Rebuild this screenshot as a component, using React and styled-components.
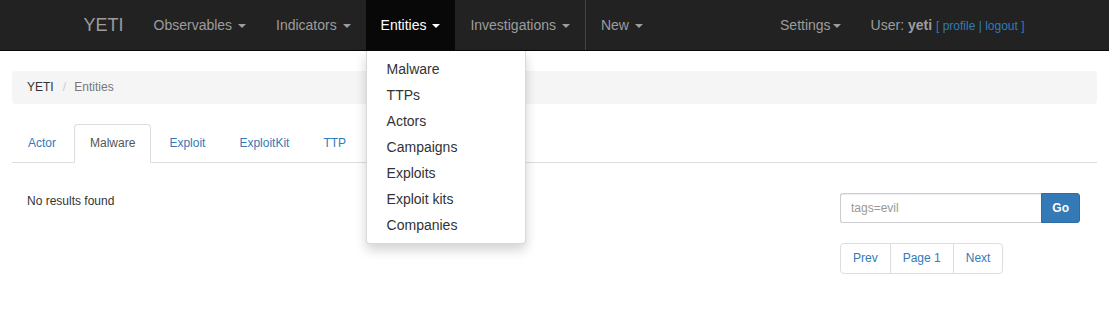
import React from 'react';
import styled, { createGlobalStyle } from 'styled-components';

const GlobalStyle = createGlobalStyle`
  * { box-sizing: border-box; }
  body {
    margin: 0;
    font-family: "Liberation Sans", Arial, Helvetica, sans-serif;
    font-size: 12px;
    line-height: 1.42857;
    color: #333;
    background: #fff;
  }
  a { text-decoration: none; }
`;

const Navbar = styled.nav`
  background: #222;
  border-bottom: 1px solid #080808;
  height: 51px;
  margin-bottom: 20px;
`;

const NavContainer = styled.div`
  width: 970px;
  margin: 0 auto;
  display: flex;
  height: 50px;
  font-size: 14px;
  line-height: 20px;
`;

const Brand = styled.a`
  padding: 15px 15px 15px 14px;
  font-size: 18px;
  line-height: 20px;
  color: #9d9d9d;
`;

const NavList = styled.ul`
  display: flex;
  list-style: none;
  margin: 0;
  padding: 0;
`;

const NavItem = styled.li`
  position: relative;
  background: ${p => (p.$active ? '#080808' : 'transparent')};
  border-right: ${p => (p.$divider ? '1px solid #444' : 'none')};
`;

const NavLink = styled.a`
  display: block;
  padding: 15px;
  color: ${p => (p.$active ? '#fff' : '#9d9d9d')};
`;

const Caret = styled.span`
  display: inline-block;
  width: 0;
  height: 0;
  margin-left: 2px;
  vertical-align: middle;
  border-top: 4px solid;
  border-right: 4px solid transparent;
  border-left: 4px solid transparent;
`;

const Spacer = styled.div`
  flex: 1;
`;

const NavText = styled.p`
  margin: 15px;
  color: #9d9d9d;
  b { color: #9d9d9d; }
`;

const SmallLink = styled.span`
  font-size: 12px;
  color: #337ab7;
  a { color: #337ab7; }
`;

const Menu = styled.ul`
  position: absolute;
  top: calc(100% + 1px);
  left: 0;
  z-index: 10;
  min-width: 160px;
  margin: 0;
  padding: 5px 0;
  list-style: none;
  background: #fff;
  border: 1px solid rgba(0, 0, 0, 0.15);
  border-top: 0;
  border-radius: 0 0 4px 4px;
  box-shadow: 0 6px 12px rgba(0, 0, 0, 0.175);
`;

const MenuLink = styled.a`
  display: block;
  padding: 3px 20px;
  line-height: 20px;
  font-size: 14px;
  color: #333;
  white-space: nowrap;
`;

const Page = styled.div`
  padding: 0 12px;
`;

const Breadcrumb = styled.ol`
  display: flex;
  list-style: none;
  margin: 0 0 20px;
  padding: 8px 15px;
  background: #f5f5f5;
  border-radius: 4px;
  line-height: 17px;
`;

const Crumb = styled.li`
  color: ${p => (p.$current ? '#777' : '#333')};
  &:not(:first-child) {
    margin-left: 4px;
  }
  &:not(:first-child)::before {
    content: "/\\00a0";
    padding: 0 5px;
    color: #ccc;
  }
`;

const Tabs = styled.ul`
  display: flex;
  list-style: none;
  margin: 0;
  padding: 0;
  border-bottom: 1px solid #ddd;
`;

const Tab = styled.li`
  margin-bottom: -1px;
  margin-right: 2px;
`;

const TabLink = styled.a`
  display: block;
  padding: 10px 15px;
  line-height: 17px;
  border: 1px solid ${p => (p.$active ? '#ddd' : 'transparent')};
  border-bottom-color: transparent;
  border-radius: 4px 4px 0 0;
  background: ${p => (p.$active ? '#fff' : 'transparent')};
  color: ${p => (p.$active ? '#555' : '#337ab7')};
`;

const Results = styled.div`
  display: flex;
  justify-content: space-between;
  padding: 30px 17px 0 15px;
`;

const Empty = styled.p`
  margin: 0;
  line-height: 17px;
`;

const Side = styled.div`
  width: 240px;
`;

const InputGroup = styled.div`
  display: flex;
  height: 30px;
`;

const Input = styled.input`
  flex: 1;
  min-width: 0;
  height: 30px;
  padding: 5px 10px;
  font-family: inherit;
  font-size: 12px;
  color: #555;
  border: 1px solid #ccc;
  border-right: 0;
  border-radius: 3px 0 0 3px;
  box-shadow: inset 0 1px 1px rgba(0, 0, 0, 0.075);
  &::placeholder { color: #999; }
`;

const GoButton = styled.button`
  height: 30px;
  padding: 5px 10px;
  font-family: inherit;
  font-size: 12px;
  font-weight: bold;
  color: #fff;
  background: #337ab7;
  border: 1px solid #2e6da4;
  border-radius: 0 3px 3px 0;
`;

const Pagination = styled.ul`
  display: flex;
  list-style: none;
  margin: 20px 0 0;
  padding: 0;
`;

const PageLink = styled.a`
  display: block;
  padding: 6px 12px;
  line-height: 17px;
  color: #337ab7;
  border: 1px solid #ddd;
  margin-left: ${p => (p.$first ? '0' : '-1px')};
  border-radius: ${p => (p.$first ? '4px 0 0 4px' : p.$last ? '0 4px 4px 0' : '0')};
`;

const menuItems = ['Malware', 'TTPs', 'Actors', 'Campaigns', 'Exploits', 'Exploit kits', 'Companies'];
const tabs = ['Actor', 'Malware', 'Exploit', 'ExploitKit', 'TTP'];

export default function App() {
  return (
    <>
      <GlobalStyle />
      <Navbar>
        <NavContainer>
          <Brand href="#">YETI</Brand>
          <NavList>
            <NavItem><NavLink href="#">Observables <Caret /></NavLink></NavItem>
            <NavItem><NavLink href="#">Indicators <Caret /></NavLink></NavItem>
            <NavItem $active>
              <NavLink href="#" $active>Entities <Caret /></NavLink>
              <Menu>
                {menuItems.map(m => (
                  <li key={m}><MenuLink href="#">{m}</MenuLink></li>
                ))}
              </Menu>
            </NavItem>
            <NavItem $divider><NavLink href="#">Investigations <Caret /></NavLink></NavItem>
            <NavItem><NavLink href="#">New <Caret /></NavLink></NavItem>
          </NavList>
          <Spacer />
          <NavList>
            <NavItem><NavLink href="#">Settings<Caret /></NavLink></NavItem>
          </NavList>
          <NavText>
            User: <b>yeti</b> <SmallLink>[ <a href="#">profile</a> | <a href="#">logout</a> ]</SmallLink>
          </NavText>
        </NavContainer>
      </Navbar>
      <Page>
        <Breadcrumb>
          <Crumb>YETI</Crumb>
          <Crumb $current>Entities</Crumb>
        </Breadcrumb>
        <Tabs>
          {tabs.map(t => (
            <Tab key={t}>
              <TabLink href="#" $active={t === 'Malware'}>{t}</TabLink>
            </Tab>
          ))}
        </Tabs>
        <Results>
          <Empty>No results found</Empty>
          <Side>
            <InputGroup>
              <Input placeholder="tags=evil" />
              <GoButton>Go</GoButton>
            </InputGroup>
            <Pagination>
              <li><PageLink href="#" $first>Prev</PageLink></li>
              <li><PageLink href="#">Page 1</PageLink></li>
              <li><PageLink href="#" $last>Next</PageLink></li>
            </Pagination>
          </Side>
        </Results>
      </Page>
    </>
  );
}
